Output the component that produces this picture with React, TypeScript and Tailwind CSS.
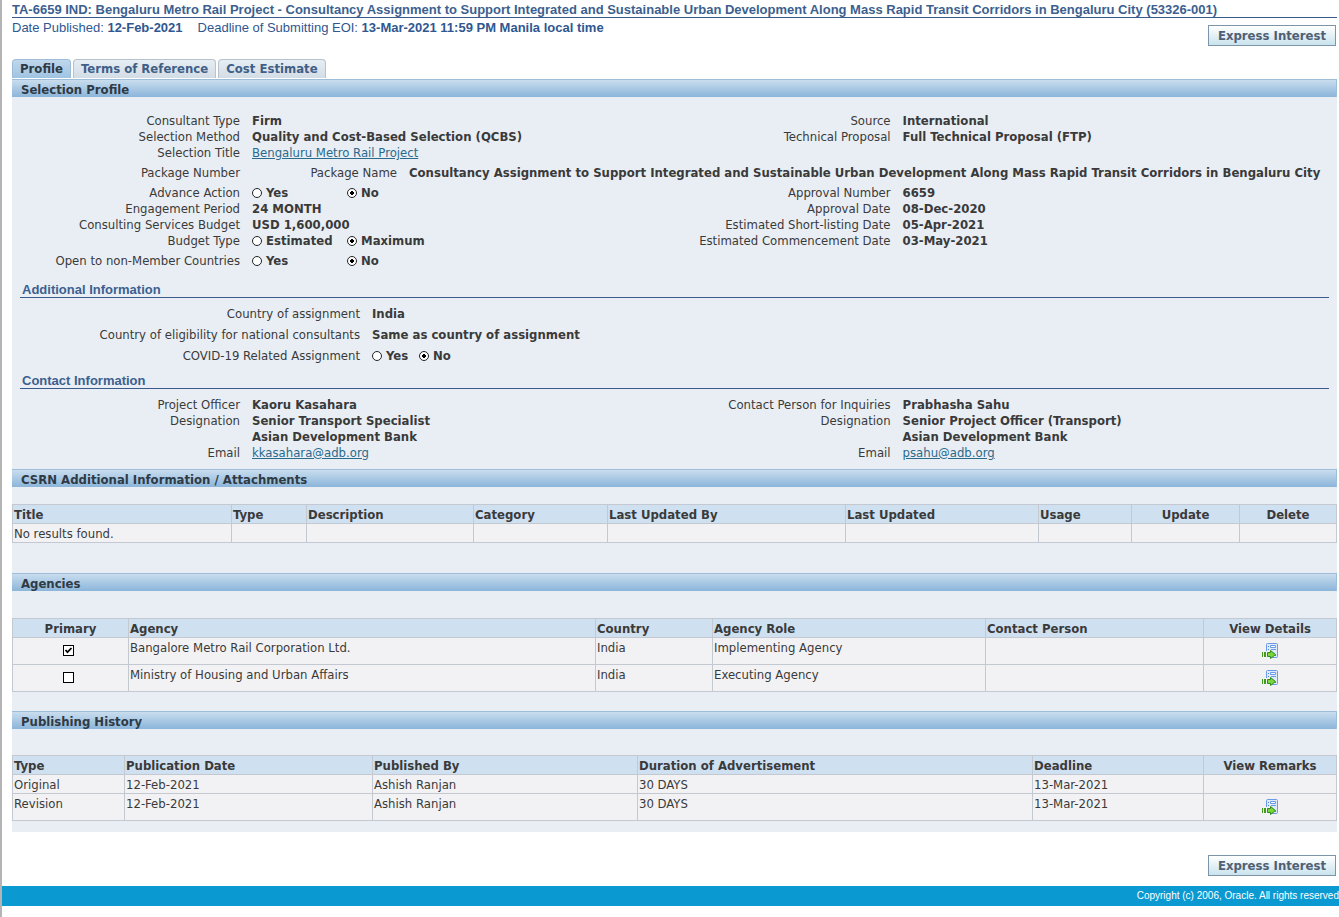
import type { ReactNode } from 'react';

const heading = 'Consultancy Assignment to Support Integrated and Sustainable Urban Development Along Mass Rapid Transit Corridors in Bengaluru City';

const choiceClass =
  'mb-px h-[10px] w-[10px] shrink-0 appearance-none rounded-full border border-[#222] bg-white checked:bg-[radial-gradient(circle,#000_0_2px,#fff_2px)]';

function Row({ label, children, wide = false }: { label: string; children?: ReactNode; wide?: boolean }) {
  return (
    <div className="flex leading-4">
      <dt className={wide ? 'mr-3 w-[348px] shrink-0 text-right' : 'mr-3 w-[228px] shrink-0 text-right'}>{label}</dt>
      <dd className="font-bold">{children}</dd>
    </div>
  );
}

function Choice({ name, options, selected, compact = false }: { name: string; options: string[]; selected: string; compact?: boolean }) {
  return (
    <div className="flex" role="radiogroup" aria-label={name}>
      {options.map((o) => (
        <label key={o} className={compact ? 'flex w-[47px] items-center gap-1' : 'flex w-[95px] items-center gap-1'}>
          <input type="radio" name={name} defaultChecked={o === selected} className={choiceClass} />
          {o}
        </label>
      ))}
    </div>
  );
}

function Bar({ children }: { children: ReactNode }) {
  return (
    <h2 className="h-[18px] border-t border-r border-[#9dbdd8] bg-gradient-to-b from-[#c9ddee] to-[#8bb5da] pl-[9px] leading-[19px] font-bold text-[#2f3a44]">
      {children}
    </h2>
  );
}

function SubHeading({ children }: { children: ReactNode }) {
  return (
    <h3 className="mx-2 h-[17px] border-b border-[#3a5a8c] pl-0.5 font-['Liberation_Sans',Arial,sans-serif] text-[13px] leading-[18px] font-bold text-[#3c5f8f]">
      {children}
    </h3>
  );
}

function Field({ children }: { children: string }) {
  return (
    <a href="#" className="font-normal text-[#2a6a8c] underline">
      {children}
    </a>
  );
}

function DetailIcon() {
  return (
    <svg width="16" height="16" viewBox="0 0 16 16" aria-hidden="true">
      <rect x="4.5" y="0.5" width="11" height="14" rx="1" fill="#dfeafb" stroke="#6b9be6" />
      <path d="M6 3.500h1M6 6.500h1M13 12.500h1" stroke="#4b7fd0" />
      <path d="M8.500 2.500h5v2h-5z" fill="#fff" stroke="#6b9be6" />
      <path d="M9 6.500h5" stroke="#6b9be6" />
      <path d="M-1 8h4.500v7H-1zM4 8h5v7H4z" fill="#f2f2f5" />
      <path d="M0 9h1v5H0zM2 9h2v5H2z" fill="#3f9a1d" />
      <path d="M5.500 9.500h3V7.500l5 4-5 4v-2h-3z" fill="#79d63c" stroke="#2f8a18" />
    </svg>
  );
}

function IconLink({ label }: { label: string }) {
  return (
    <a href="#" aria-label={label} className="flex justify-center pt-[3px] pr-px">
      <DetailIcon />
    </a>
  );
}

type Column = { name: string; width: string; center?: boolean };

function Table({ label, columns, rows }: { label: string; columns: Column[]; rows: { tall?: boolean; cells: ReactNode[] }[] }) {
  return (
    <table aria-label={label} className="w-full table-fixed border-collapse border border-[#c4c8d0]">
      <colgroup>
        {columns.map((c) => (
          <col key={c.name} className={c.width} />
        ))}
      </colgroup>
      <thead>
        <tr className="h-[19px] bg-[#cfe0f1]">
          {columns.map((c) => (
            <th key={c.name} scope="col" className={c.center ? 'border border-[#c4c8d0] p-0 pt-0.5 text-center leading-4' : 'border border-[#c4c8d0] p-0 pt-0.5 pl-px text-left leading-4'}>
              {c.name}
            </th>
          ))}
        </tr>
      </thead>
      <tbody>
        {rows.map((r, i) => (
          <tr key={i} className={r.tall ? 'h-[27px] bg-[#f2f2f5]' : 'h-[19px] bg-[#f2f2f5]'}>
            {r.cells.map((cell, j) => (
              <td key={j} className="border border-[#c4c8d0] p-0 pt-0.5 pl-px align-top leading-4">
                {cell}
              </td>
            ))}
          </tr>
        ))}
      </tbody>
    </table>
  );
}

function Primary({ agency, checked = false }: { agency: string; checked?: boolean }) {
  return (
    <div className="flex justify-center pt-[5px] pr-1.5">
      <span className="relative h-[11px] w-[11px]">
        <input type="checkbox" aria-label={'Primary: ' + agency} defaultChecked={checked} className="peer block h-[11px] w-[11px] appearance-none border border-black bg-white" />
        <svg className="pointer-events-none absolute inset-0 hidden peer-checked:block" width="11" height="11" viewBox="0 0 11 11" aria-hidden="true">
          <path d="M2.500 5l2 2.200L8.500 3" fill="none" stroke="#000" strokeWidth="1.800" />
        </svg>
      </span>
    </div>
  );
}

function ExpressButton() {
  return (
    <button type="button" className="h-[21px] border border-[#7d95a8] bg-gradient-to-b from-white to-[#c9e3ec] px-[9px] leading-[19px] font-bold whitespace-nowrap text-[#4f6075]">
      Express Interest
    </button>
  );
}

const tabClass = 'h-[19px] rounded-t-[4px] border border-b-0 border-[#b9c2cb] bg-gradient-to-b from-[#e6edf4] to-[#d3dde6] px-[7px] leading-[18px] font-bold text-[#3f5f86]';
const activeTabClass = 'h-[19px] rounded-t-[4px] border border-b-0 border-[#9dbdd8] bg-gradient-to-b from-[#bfd7ec] to-[#9fc4e2] px-[7px] leading-[18px] font-bold text-[#2f3a44]';

export default function App() {
  return (
    <div className="min-h-screen overflow-x-hidden border-l-2 border-[#b4b4b4] bg-white font-['DejaVu_Sans_Condensed','DejaVu_Sans',sans-serif] text-[13px] text-[#3a3a3a]">
      <div className="pr-0.5 pb-2.5 pl-2.5">
        <header className="font-['Liberation_Sans',Arial,sans-serif] text-[13px] text-[#2f5790]">
          <h1 className="h-[18px] border-b border-[#3a5a8c] leading-[19px] font-bold whitespace-nowrap text-[#3c5f8f]">
            TA-6659 IND: Bengaluru Metro Rail Project - {heading} (53326-001)
          </h1>
          <div className="flex h-[41px] justify-between">
            <p className="leading-5">
              Date Published: <b>12-Feb-2021</b>
              <span className="ml-[15px]">
                Deadline of Submitting EOI: <b>13-Mar-2021 11:59 PM Manila local time</b>
              </span>
            </p>
            <div className="pt-[7px] pr-px font-['DejaVu_Sans_Condensed','DejaVu_Sans',sans-serif]">
              <ExpressButton />
            </div>
          </div>
        </header>

        <nav className="flex h-5 gap-0.5" aria-label="Sections">
          <button type="button" className={activeTabClass}>Profile</button>
          <button type="button" className={tabClass}>Terms of Reference</button>
          <button type="button" className={tabClass}>Cost Estimate</button>
        </nav>

        <main className="bg-[#e9eef5] pb-[11px]">
          <Bar>Selection Profile</Bar>
          <div className="flex pt-4">
            <dl className="w-[49.1%]">
              <Row label="Consultant Type">Firm</Row>
              <Row label="Selection Method">Quality and Cost-Based Selection (QCBS)</Row>
              <Row label="Selection Title"><Field>Bengaluru Metro Rail Project</Field></Row>
            </dl>
            <dl className="flex-1">
              <Row label="Source">International</Row>
              <Row label="Technical Proposal">Full Technical Proposal (FTP)</Row>
            </dl>
          </div>
          <dl className="flex h-6 items-center leading-4 whitespace-nowrap">
            <div className="flex">
              <dt className="w-[228px] text-right">Package Number</dt>
              <dd />
            </div>
            <div className="flex">
              <dt className="mr-3 w-[157px] text-right">Package Name</dt>
              <dd className="font-bold">{heading}</dd>
            </div>
          </dl>
          <div className="flex pb-3">
            <dl className="w-[49.1%]">
              <Row label="Advance Action"><Choice name="Advance Action" options={['Yes', 'No']} selected="No" /></Row>
              <Row label="Engagement Period">24 MONTH</Row>
              <Row label="Consulting Services Budget">USD 1,600,000</Row>
              <Row label="Budget Type"><Choice name="Budget Type" options={['Estimated', 'Maximum']} selected="Maximum" /></Row>
              <div className="pt-1">
                <Row label="Open to non-Member Countries"><Choice name="Open to non-Member Countries" options={['Yes', 'No']} selected="No" /></Row>
              </div>
            </dl>
            <dl className="flex-1">
              <Row label="Approval Number">6659</Row>
              <Row label="Approval Date">08-Dec-2020</Row>
              <Row label="Estimated Short-listing Date">05-Apr-2021</Row>
              <Row label="Estimated Commencement Date">03-May-2021</Row>
            </dl>
          </div>

          <SubHeading>Additional Information</SubHeading>
          <dl className="flex flex-col gap-[5px] pt-2 pb-2">
            <Row wide label="Country of assignment">India</Row>
            <Row wide label="Country of eligibility for national consultants">Same as country of assignment</Row>
            <Row wide label="COVID-19 Related Assignment"><Choice compact name="COVID-19 Related Assignment" options={['Yes', 'No']} selected="No" /></Row>
          </dl>

          <SubHeading>Contact Information</SubHeading>
          <div className="flex pt-2 pb-2">
            <dl className="w-[49.1%]">
              <Row label="Project Officer">Kaoru Kasahara</Row>
              <Row label="Designation">Senior Transport Specialist<br />Asian Development Bank</Row>
              <Row label="Email"><Field>kkasahara@adb.org</Field></Row>
            </dl>
            <dl className="flex-1">
              <Row label="Contact Person for Inquiries">Prabhasha Sahu</Row>
              <Row label="Designation">Senior Project Officer (Transport)<br />Asian Development Bank</Row>
              <Row label="Email"><Field>psahu@adb.org</Field></Row>
            </dl>
          </div>

          <Bar>CSRN Additional Information / Attachments</Bar>
          <div className="pt-[17px] pb-[30px]">
            <Table
              label="Attachments"
              columns={[
                { name: 'Title', width: 'w-[219px]' },
                { name: 'Type', width: 'w-[75px]' },
                { name: 'Description', width: 'w-[167px]' },
                { name: 'Category', width: 'w-[134px]' },
                { name: 'Last Updated By', width: 'w-[238px]' },
                { name: 'Last Updated', width: 'w-[193px]' },
                { name: 'Usage', width: 'w-[93px]' },
                { name: 'Update', width: 'w-[108px]', center: true },
                { name: 'Delete', width: 'w-[97px]', center: true },
              ]}
              rows={[{ cells: ['No results found.', '', '', '', '', '', '', '', ''] }]}
            />
          </div>

          <Bar>Agencies</Bar>
          <div className="pt-[27px] pb-[19px]">
            <Table
              label="Agencies"
              columns={[
                { name: 'Primary', width: 'w-[116px]', center: true },
                { name: 'Agency', width: 'w-[467px]' },
                { name: 'Country', width: 'w-[117px]' },
                { name: 'Agency Role', width: 'w-[273px]' },
                { name: 'Contact Person', width: 'w-[218px]' },
                { name: 'View Details', width: 'w-[133px]', center: true },
              ]}
              rows={[
                { tall: true, cells: [<Primary checked agency="Bangalore Metro Rail Corporation Ltd." />, 'Bangalore Metro Rail Corporation Ltd.', 'India', 'Implementing Agency', '', <IconLink label="View details" />] },
                { tall: true, cells: [<Primary agency="Ministry of Housing and Urban Affairs" />, 'Ministry of Housing and Urban Affairs', 'India', 'Executing Agency', '', <IconLink label="View details" />] },
              ]}
            />
          </div>

          <Bar>Publishing History</Bar>
          <div className="pt-[26px]">
            <Table
              label="Publishing History"
              columns={[
                { name: 'Type', width: 'w-[112px]' },
                { name: 'Publication Date', width: 'w-[248px]' },
                { name: 'Published By', width: 'w-[265px]' },
                { name: 'Duration of Advertisement', width: 'w-[395px]' },
                { name: 'Deadline', width: 'w-[171px]' },
                { name: 'View Remarks', width: 'w-[133px]', center: true },
              ]}
              rows={[
                { cells: ['Original', '12-Feb-2021', 'Ashish Ranjan', '30 DAYS', '13-Mar-2021', ''] },
                { tall: true, cells: ['Revision', '12-Feb-2021', 'Ashish Ranjan', '30 DAYS', '13-Mar-2021', <IconLink label="View remarks" />] },
              ]}
            />
          </div>
        </main>

        <div className="flex justify-end pt-[23px] pr-px">
          <ExpressButton />
        </div>
      </div>
      <footer className="h-5 bg-[#0a99d0] text-right font-['Liberation_Sans',Arial,sans-serif] text-[10px] leading-5 whitespace-nowrap text-white">
        Copyright (c) 2006, Oracle. All rights reserved
      </footer>
    </div>
  );
}
